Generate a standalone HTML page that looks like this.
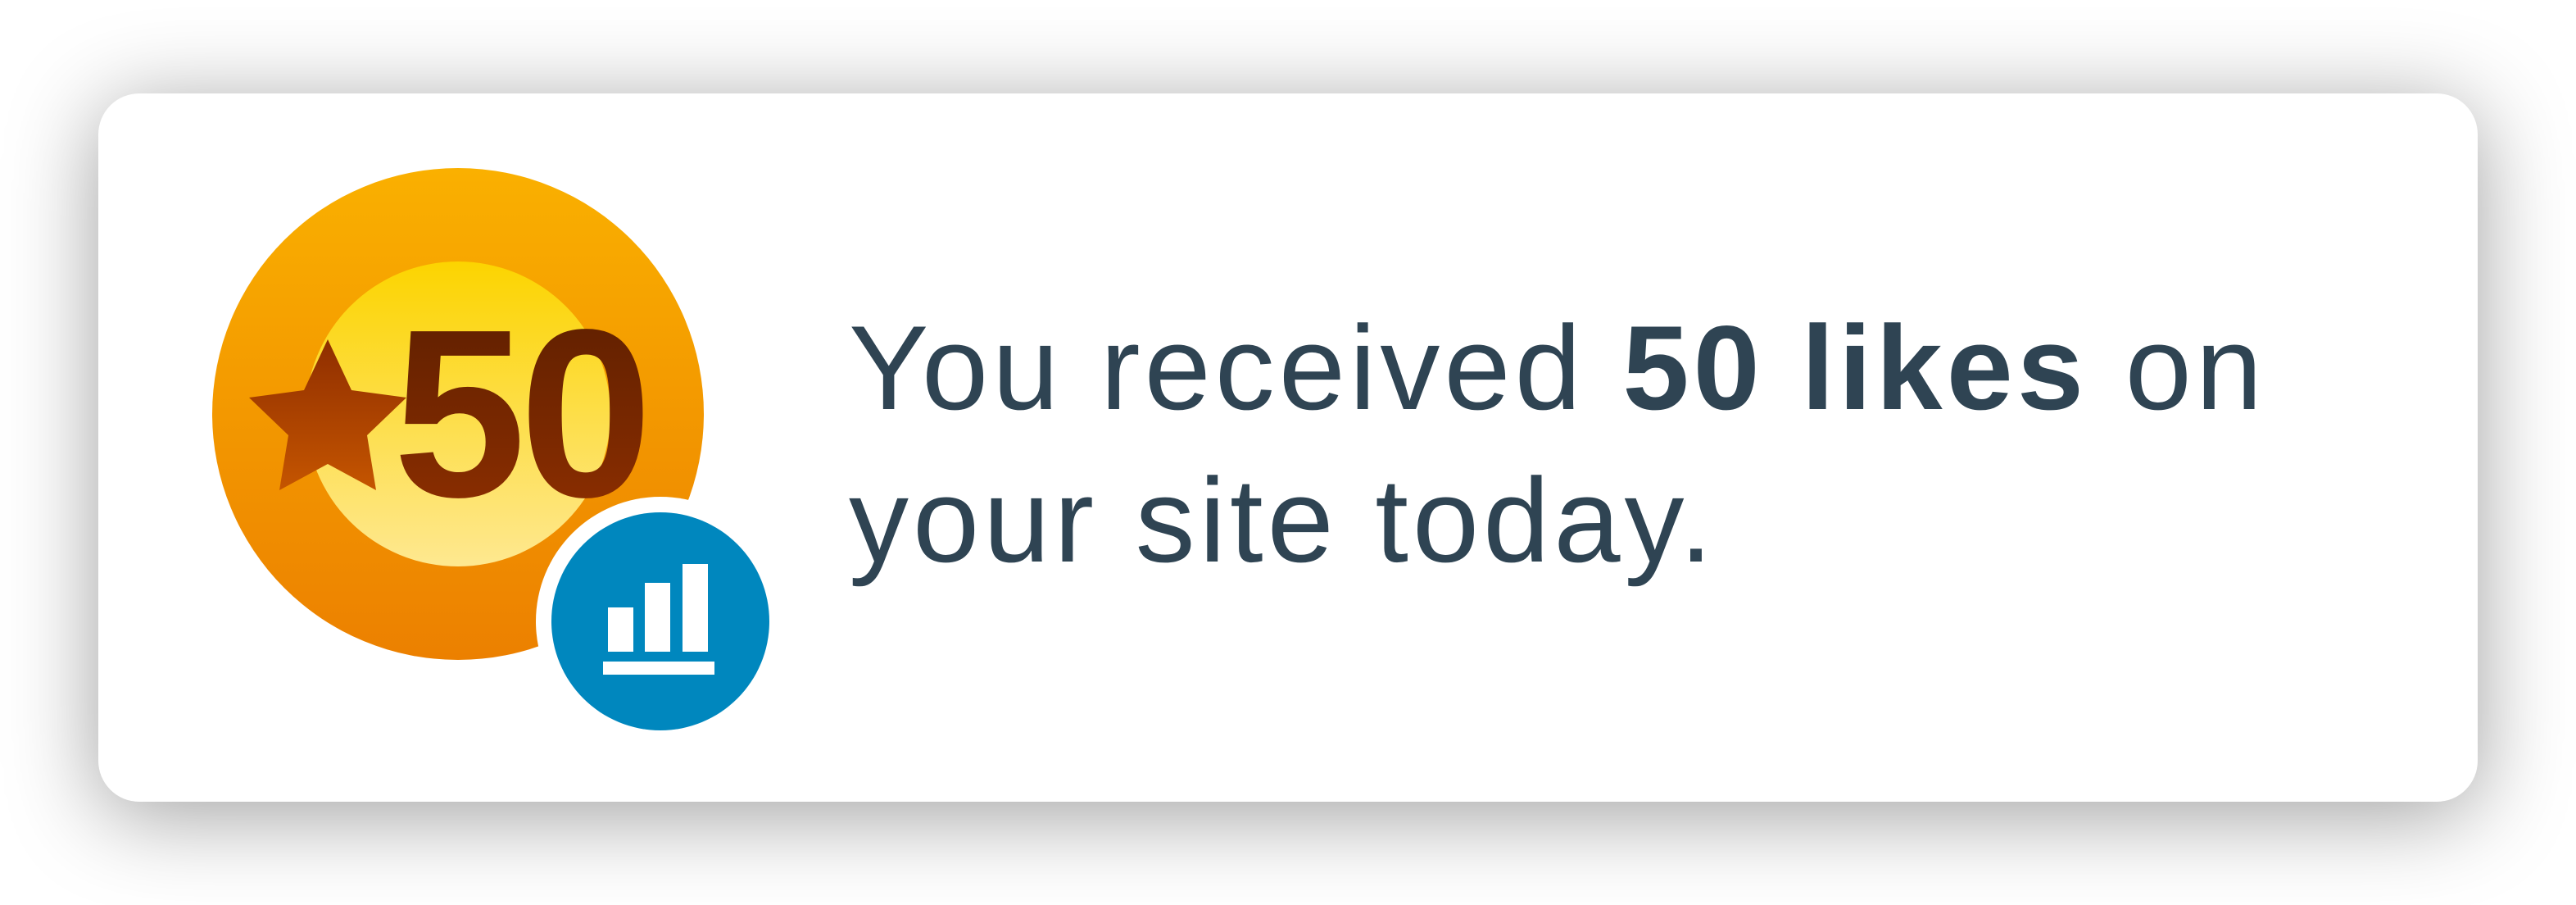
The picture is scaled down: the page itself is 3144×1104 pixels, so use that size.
<!DOCTYPE html>
<html><head><meta charset="utf-8"><style>
html,body{margin:0;padding:0;width:3144px;height:1104px;background:#fff;overflow:hidden}
.card{position:absolute;left:120px;top:114px;width:2904px;height:864px;background:#fff;border-radius:50px;box-shadow:0 16px 110px rgba(0,0,0,.38)}
.txt{position:absolute;left:1036px;top:356px;font-family:"Liberation Sans",sans-serif;font-size:146px;line-height:186px;color:#2f4453;white-space:nowrap;letter-spacing:5px}
.txt b{font-weight:bold}
</style></head><body>
<div class="card"></div>
<svg style="position:absolute;left:0;top:0" width="1000" height="1000" viewBox="0 0 1000 1000">
<defs>
<linearGradient id="o" x1="0" y1="0" x2="0" y2="1"><stop offset="0" stop-color="#fab000"/><stop offset="1" stop-color="#ec8000"/></linearGradient>
<linearGradient id="y" x1="0" y1="0" x2="0" y2="1"><stop offset="0" stop-color="#fcd400"/><stop offset="1" stop-color="#fee890"/></linearGradient>
<linearGradient id="s" x1="0" y1="0" x2="0" y2="1"><stop offset="0" stop-color="#8f2e00"/><stop offset="1" stop-color="#c55500"/></linearGradient>
<linearGradient id="n" x1="0" y1="0" x2="0" y2="1"><stop offset="0" stop-color="#5a1e00"/><stop offset="1" stop-color="#923000"/></linearGradient>
</defs>
<circle cx="559" cy="505" r="300" fill="url(#o)"/>
<circle cx="559" cy="505" r="186" fill="url(#y)"/>
<polygon points="400,414 429,476 496,485 448,531 459,598 400,566 341,598 352,531 304,485 371,476" fill="url(#s)"/>
<text x="634" y="605" text-anchor="middle" font-family="Liberation Sans,sans-serif" font-weight="bold" font-size="292" fill="url(#n)" letter-spacing="-8">50</text>
<circle cx="806" cy="758" r="152" fill="#fff"/>
<circle cx="806" cy="758" r="133" fill="#0087be"/>
<rect x="742" y="741" width="31" height="54" fill="#fff"/>
<rect x="787" y="711" width="31" height="84" fill="#fff"/>
<rect x="833" y="688" width="31" height="107" fill="#fff"/>
<rect x="736" y="807" width="136" height="16" fill="#fff"/>
</svg>
<div class="txt">You received <b>50 likes</b> on<br>your site today.</div>
</body></html>
